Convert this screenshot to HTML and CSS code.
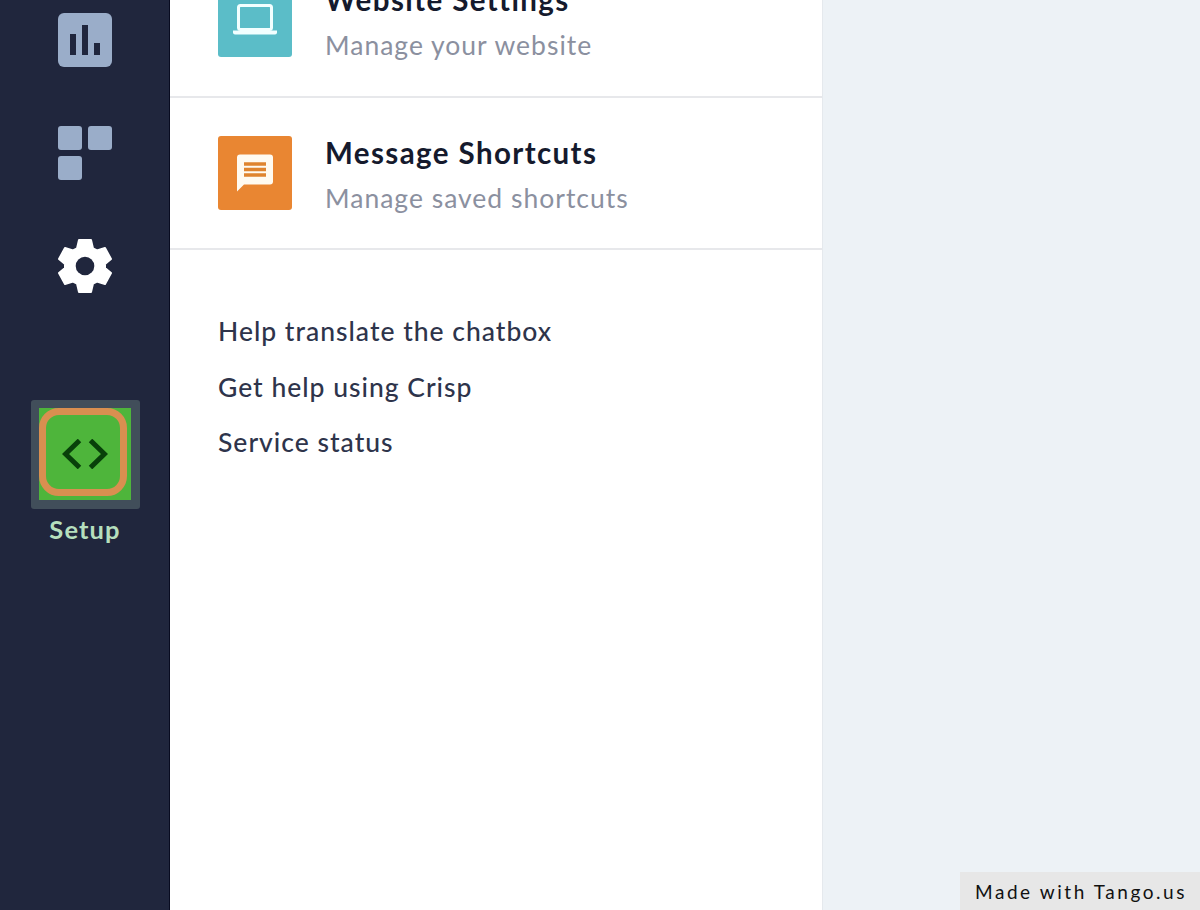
FILE: index.html
```
<!DOCTYPE html>
<html lang="en">
  <head>
    <meta charset="utf-8">
    <title>Settings</title>
    <link rel="stylesheet" href="styles.css">
  </head>
  <body>
    <div class="app">
      <nav class="sidebar">
        <svg class="nav-icon analytics" viewBox="0 0 54 54">
          <rect width="54" height="54" rx="6" fill="#9aadc9"/>
          <path d="M12 21h6v21h-6zM24 12h6v30h-6zM36 30h6v12h-6z" fill="#20263d"/>
        </svg>
        <svg class="nav-icon plugins" viewBox="0 0 54 54" fill="#9aadc9">
          <rect width="24" height="24" rx="3"/>
          <rect x="30" width="24" height="24" rx="3"/>
          <rect y="30" width="24" height="24" rx="3"/>
        </svg>
        <svg class="nav-icon settings" viewBox="-27 -27 54 54">
          <path d="M-6 -26H6L8 -17.5L12 -15.5L20 -18L26 -7L20 -2V2L26 7L20 18L12 15.5L8 17.5L6 26H-6L-8 17.5L-12 15.5L-20 18L-26 7L-20 2V-2L-26 -7L-20 -18L-12 -15.5L-8 -17.5Z" fill="#fff" stroke="#fff" stroke-width="2" stroke-linejoin="round"/>
          <circle r="9.3" fill="#20263d"/>
        </svg>
        <div class="setup-highlight">
          <div class="setup-button">
            <svg class="code-icon" viewBox="0 0 46 30">
              <path d="M17.500 1.500L3.500 15L17.500 28.500M28.500 1.500L42.500 15L28.500 28.500" fill="none" stroke="#08400a" stroke-width="5"/>
            </svg>
          </div>
        </div>
        <span class="setup-label">Setup</span>
      </nav>

      <main class="panel">
        <div class="item item-website">
          <div class="item-icon teal">
            <svg width="44" height="32" viewBox="0 0 44 32">
              <rect x="5.500" y="1.500" width="33" height="24" rx="2" fill="none" stroke="#f2ffff" stroke-width="3"/>
              <path d="M0 26.500h44v2q0 2 -2 2h-40q-2 0 -2 -2z" fill="#f2ffff"/>
            </svg>
          </div>
          <div class="item-text">
            <h2>Website Settings</h2>
            <p>Manage your website</p>
          </div>
        </div>
        <div class="item">
          <div class="item-icon orange">
            <svg width="38" height="38" viewBox="0 0 38 38">
              <path d="M4 0.500h30q3 0 3 3v24q0 3 -3 3h-26l-7 7v-34q0 -3 3 -3z" fill="#fffaf0"/>
              <path d="M8 10h22M8 15.500h22M8 21h22" stroke="#df842e" stroke-width="3.500"/>
            </svg>
          </div>
          <div class="item-text">
            <h2>Message Shortcuts</h2>
            <p>Manage saved shortcuts</p>
          </div>
        </div>
        <div class="links">
          <a class="link">Help translate the chatbox</a>
          <a class="link">Get help using Crisp</a>
          <a class="link">Service status</a>
        </div>
      </main>

      <div class="content"></div>
    </div>
    <div class="made-with">Made with Tango.us</div>
  </body>
</html>
```
FILE: styles.css
```
* {
    box-sizing: border-box;
}

body {
    margin: 0;
    font-family: Lato, "Liberation Sans", sans-serif;
    overflow: hidden;
}

.app {
    display: flex;
    height: 910px;
    background: #edf2f6;
}

.sidebar {
    display: flex;
    flex-direction: column;
    align-items: center;
    width: 170px;
    padding: 13px 0 0 1px;
    background: #20263d;
    border-right: 1px solid #080b20;
}

.nav-icon {
    flex: none;
    width: 54px;
    height: 54px;
}

.plugins,
.settings {
    margin-top: 59px;
}

.setup-highlight {
    width: 109px;
    height: 109px;
    margin-top: 107px;
    padding: 8px;
    background: #414e5a;
    border-radius: 3px;
}

.setup-button {
    display: flex;
    align-items: center;
    justify-content: center;
    width: 92px;
    height: 92px;
    background: #4eb53b;
    position: relative;
}

/* orange ring around the setup button */
.setup-button::before {
    content: "";
    position: absolute;
    left: 0;
    top: 0;
    width: 88px;
    height: 88px;
    box-sizing: border-box;
    border: 7px solid #d98f50;
    border-radius: 20px;
}

.code-icon {
    width: 46px;
    height: 30px;
}

.setup-label {
    margin-top: 5px;
    font-size: 25.5px;
    line-height: 30px;
    font-weight: bold;
    letter-spacing: 1.1px;
    color: #b5dfbd;
}

.panel {
    width: 653px;
    background: #fff;
    border-right: 1px solid #e5e9ed;
}

.item {
    display: flex;
    gap: 33px;
    height: 152px;
    padding: 38px 48px 0;
    border-bottom: 2px solid #e7e8eb;
}

.item-website {
    height: 153px;
    margin-top: -55px;
}

.item-icon {
    display: flex;
    align-items: center;
    justify-content: center;
    flex: none;
    width: 74px;
    height: 74px;
    border-radius: 3px;
}

.teal {
    background: #5bbdc8;
}

.orange {
    background: #e98632;
}

h2 {
    margin: -2px 0 0;
    font-size: 29.5px;
    line-height: 38px;
    letter-spacing: 1.4px;
    color: #151a2d;
}

p {
    margin: 8px 0 0;
    font-size: 26.5px;
    line-height: 36px;
    letter-spacing: 1px;
    color: #8b909f;
}

h2,
p,
.link {
    white-space: nowrap;
}

.links {
    display: flex;
    flex-direction: column;
    gap: 19.5px;
    padding: 63px 48px 0;
}

.link {
    font-size: 26.5px;
    line-height: 36px;
    font-weight: 500;
    letter-spacing: 1px;
    color: #2e344b;
}

.content {
    flex: 1;
}

.made-with {
    position: absolute;
    right: 0;
    bottom: 0;
    width: 240px;
    height: 38px;
    padding-left: 15px;
    background: #e7e7e7;
    font-size: 19px;
    line-height: 39px;
    letter-spacing: 2.55px;
    white-space: nowrap;
    color: #111;
}
```
